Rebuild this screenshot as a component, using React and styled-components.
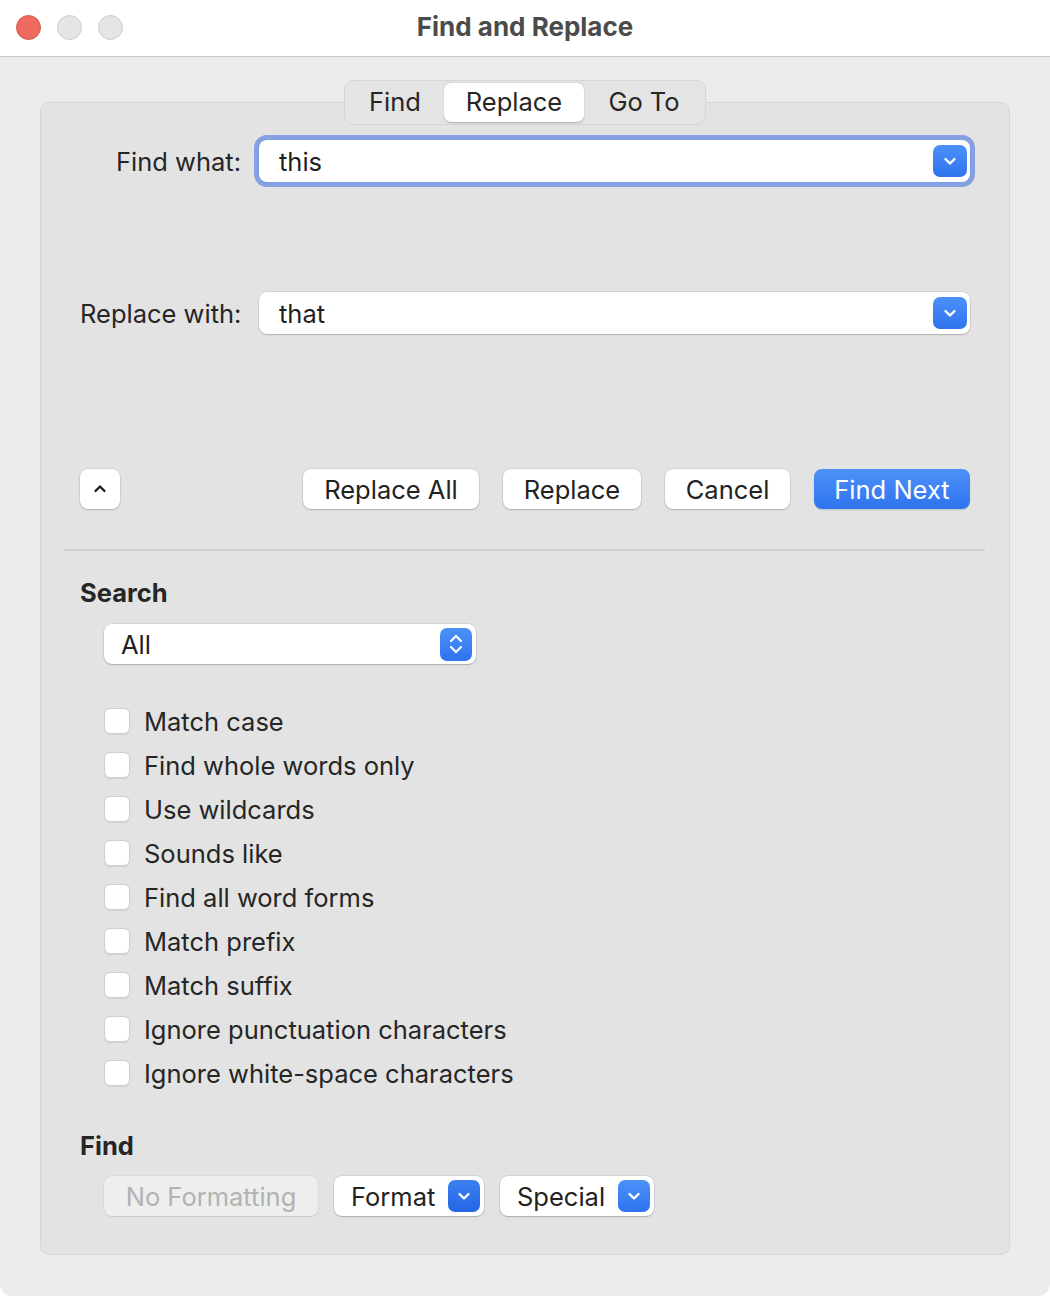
import React from "react";
import styled, { createGlobalStyle, css } from "styled-components";

const GlobalStyle = createGlobalStyle`
  html, body {
    margin: 0;
    padding: 0;
    background: #ffffff;
  }
  body {
    font-family: Inter, "Noto Sans", "Liberation Sans", sans-serif;
    color: #262626;
  }
`;

const options = [
  "Match case",
  "Find whole words only",
  "Use wildcards",
  "Sounds like",
  "Find all word forms",
  "Match prefix",
  "Match suffix",
  "Ignore punctuation characters",
  "Ignore white-space characters",
];

const FS = "25.5px";

const blueFill = css`
  background: linear-gradient(180deg, #4c91f8 0%, #2f73ef 100%);
`;

function ChevronDown() {
  return (
    <svg width="16" height="16" viewBox="0 0 16 16" fill="none">
      <path d="M3.5 6 L8 10.5 L12.5 6" stroke="#fff" strokeWidth="2.4" strokeLinecap="round" strokeLinejoin="round" />
    </svg>
  );
}

function ChevronUp() {
  return (
    <svg width="16" height="16" viewBox="0 0 16 16" fill="none">
      <path d="M3.5 10 L8 5.5 L12.5 10" stroke="#1e1e1e" strokeWidth="2.4" strokeLinecap="round" strokeLinejoin="round" />
    </svg>
  );
}

function Stepper() {
  return (
    <svg width="18" height="26" viewBox="0 0 18 26" fill="none">
      <path d="M4 10 L9 5 L14 10" stroke="#fff" strokeWidth="2.2" strokeLinecap="round" strokeLinejoin="round" />
      <path d="M4 16 L9 21 L14 16" stroke="#fff" strokeWidth="2.2" strokeLinecap="round" strokeLinejoin="round" />
    </svg>
  );
}

function App() {
  return (
    <>
      <GlobalStyle />
      <Window>
        <TitleBar>
          <Lights>
            <Light $color="#ee6a5f" $edge="#d8584e" />
            <Light $color="#e5e5e5" $edge="#cdcdcd" />
            <Light $color="#e5e5e5" $edge="#cdcdcd" />
          </Lights>
          <Title>Find and Replace</Title>
        </TitleBar>

        <Body>
          <Tabs>
            <Tab $w={98}>Find</Tab>
            <Tab $w={140} $active>Replace</Tab>
            <Tab $w={120}>Go To</Tab>
          </Tabs>

          <Panel>
            <FieldGrid>
              <Label>Find what:</Label>
              <Combo $focused>
                <ComboText>this</ComboText>
                <BlueBtn>
                  <ChevronDown />
                </BlueBtn>
              </Combo>
              <Spacer />
              <Spacer />
              <Label>Replace with:</Label>
              <Combo>
                <ComboText>that</ComboText>
                <BlueBtn>
                  <ChevronDown />
                </BlueBtn>
              </Combo>
            </FieldGrid>

            <ButtonRow>
              <IconButton>
                <ChevronUp />
              </IconButton>
              <Actions>
                <PushButton $w={176}>Replace All</PushButton>
                <PushButton $w={138}>Replace</PushButton>
                <PushButton $w={125}>Cancel</PushButton>
                <PushButton $w={156} $primary>Find Next</PushButton>
              </Actions>
            </ButtonRow>

            <Divider />

            <Section>
              <Heading>Search</Heading>
              <Select>
                <SelectText>All</SelectText>
                <StepBtn>
                  <Stepper />
                </StepBtn>
              </Select>

              <CheckList>
                {options.map((o) => (
                  <CheckRow key={o}>
                    <Box />
                    <span>{o}</span>
                  </CheckRow>
                ))}
              </CheckList>

              <Heading $top={44}>Find</Heading>
              <FormatRow>
                <PushButton $w={214} $disabled>No Formatting</PushButton>
                <MenuButton $w={150}>
                  Format
                  <SmallBlue $dark>
                    <ChevronDown />
                  </SmallBlue>
                </MenuButton>
                <MenuButton $w={154}>
                  Special
                  <SmallBlue>
                    <ChevronDown />
                  </SmallBlue>
                </MenuButton>
              </FormatRow>
            </Section>
          </Panel>
        </Body>
      </Window>
    </>
  );
}

const Window = styled.div`
  width: 1050px;
  height: 1296px;
  background: #ececec;
  border-radius: 0 0 12px 12px;
  overflow: hidden;
  display: flex;
  flex-direction: column;
`;

const TitleBar = styled.div`
  height: 56px;
  background: #ffffff;
  border-bottom: 1px solid #cbcbcb;
  display: flex;
  align-items: center;
  justify-content: center;
  position: relative;
`;

const Lights = styled.div`
  position: absolute;
  left: 16px;
  top: 15px;
  display: flex;
  gap: 16px;
`;

const Light = styled.div`
  width: 23px;
  height: 23px;
  border-radius: 50%;
  background: ${(p) => p.$color};
  border: 1px solid ${(p) => p.$edge};
`;

const Title = styled.div`
  font-size: 26px;
  font-weight: 700;
  color: #4b4b4b;
  margin-top: -3px;
`;

const Body = styled.div`
  flex: 1;
  padding: 23px 40px 41px;
  display: flex;
  flex-direction: column;
  align-items: center;
`;

const Tabs = styled.div`
  display: flex;
  padding: 2px 1px;
  background: #e4e4e4;
  border: 1px solid #d6d6d6;
  border-radius: 9px;
  position: relative;
  z-index: 1;
`;

const Tab = styled.div`
  width: ${(p) => p.$w}px;
  height: 39px;
  display: flex;
  align-items: center;
  justify-content: center;
  font-size: ${FS};
  color: #262626;
  border-radius: 7px;
  padding-bottom: 2px;
  box-sizing: border-box;
  ${(p) =>
    p.$active &&
    css`
      background: #ffffff;
      box-shadow: 0 0.5px 1.5px rgba(0, 0, 0, 0.25);
    `}
`;

const Panel = styled.div`
  align-self: stretch;
  flex: 1;
  margin-top: -23px;
  background: #e3e3e3;
  border: 1px solid #d6d6d6;
  border-radius: 9px;
  padding: 37px 39px 0;
  display: flex;
  flex-direction: column;
`;

const FieldGrid = styled.div`
  display: grid;
  grid-template-columns: 161px 1fr;
  column-gap: 18px;
  align-items: center;
`;

const Spacer = styled.div`
  height: 110px;
`;

const Label = styled.div`
  text-align: right;
  font-size: ${FS};
  white-space: nowrap;
`;

const Combo = styled.div`
  height: 42px;
  background: #ffffff;
  border-radius: 8px;
  display: flex;
  align-items: center;
  justify-content: space-between;
  padding: 0 3px 0 20px;
  box-shadow: 0 0 0 0.5px rgba(0, 0, 0, 0.12), 0 1px 1.5px rgba(0, 0, 0, 0.18);
  ${(p) =>
    p.$focused &&
    css`
      box-shadow: 0 0 0 1px #7d9ee6, 0 0 0 5px rgba(88, 130, 226, 0.68);
    `}
`;

const ComboText = styled.span`
  font-size: ${FS};
  color: #1f1f1f;
`;

const BlueBtn = styled.div`
  ${blueFill}
  width: 34px;
  height: 32px;
  border-radius: 7px;
  display: flex;
  align-items: center;
  justify-content: center;
`;

const ButtonRow = styled.div`
  margin-top: 135px;
  display: flex;
  align-items: center;
  justify-content: space-between;
`;

const IconButton = styled.div`
  width: 40px;
  height: 40px;
  background: #ffffff;
  border-radius: 8px;
  box-shadow: 0 0 0 0.5px rgba(0, 0, 0, 0.12), 0 1px 1.5px rgba(0, 0, 0, 0.2);
  display: flex;
  align-items: center;
  justify-content: center;
`;

const Actions = styled.div`
  display: flex;
  gap: 24px;
`;

const PushButton = styled.div`
  width: ${(p) => p.$w}px;
  height: 40px;
  box-sizing: border-box;
  border-radius: 8px;
  display: flex;
  align-items: center;
  justify-content: center;
  font-size: ${FS};
  color: #222222;
  background: #ffffff;
  box-shadow: 0 0 0 0.5px rgba(0, 0, 0, 0.12), 0 1px 1.5px rgba(0, 0, 0, 0.2);
  ${(p) =>
    p.$primary &&
    css`
      ${blueFill}
      color: #ffffff;
      box-shadow: 0 1px 1.5px rgba(0, 0, 0, 0.15);
    `}
  ${(p) =>
    p.$disabled &&
    css`
      background: #eeeeee;
      color: #b2b2b2;
      box-shadow: 0 0 0 0.5px rgba(0, 0, 0, 0.08), 0 1px 1px rgba(0, 0, 0, 0.08);
    `}
`;

const Divider = styled.div`
  margin: 40px -15px 0 -16px;
  height: 2px;
  background: #d2d2d2;
`;

const Section = styled.div`
  display: flex;
  flex-direction: column;
  align-items: flex-start;
`;

const Heading = styled.div`
  margin-top: ${(p) => p.$top || 27}px;
  font-size: ${FS};
  font-weight: 700;
  color: #262626;
  line-height: 30px;
`;

const Select = styled.div`
  margin: 16px 0 0 24px;
  width: 372px;
  height: 40px;
  background: #ffffff;
  border-radius: 8px;
  box-shadow: 0 0 0 0.5px rgba(0, 0, 0, 0.12), 0 1px 1.5px rgba(0, 0, 0, 0.2);
  display: flex;
  align-items: center;
  justify-content: space-between;
  padding: 0 4px 0 17px;
  box-sizing: border-box;
  font-size: ${FS};
`;

const SelectText = styled.span`
  color: #1f1f1f;
`;

const StepBtn = styled.div`
  ${blueFill}
  width: 32px;
  height: 33px;
  border-radius: 7px;
  display: flex;
  align-items: center;
  justify-content: center;
`;

const CheckList = styled.div`
  margin: 43px 0 0 24px;
  display: flex;
  flex-direction: column;
  gap: 16px;
`;

const CheckRow = styled.div`
  display: flex;
  align-items: center;
  gap: 14px;
  height: 28px;
  font-size: ${FS};
  color: #262626;
`;

const Box = styled.div`
  width: 26px;
  height: 26px;
  box-sizing: border-box;
  background: #ffffff;
  border-radius: 6px;
  border: 1px solid #d0d0d0;
  box-shadow: 0 0.5px 1px rgba(0, 0, 0, 0.08);
`;

const FormatRow = styled.div`
  margin: 15px 0 0 24px;
  display: flex;
  gap: 16px;
`;

const MenuButton = styled(PushButton)`
  justify-content: space-between;
  padding: 0 4px 0 17px;
`;

const SmallBlue = styled.div`
  ${blueFill}
  ${(p) =>
    p.$dark &&
    css`
      background: linear-gradient(180deg, #3b7ff0 0%, #2466e4 100%);
    `}
  width: 32px;
  height: 32px;
  border-radius: 7px;
  display: flex;
  align-items: center;
  justify-content: center;
`;

export default App;
